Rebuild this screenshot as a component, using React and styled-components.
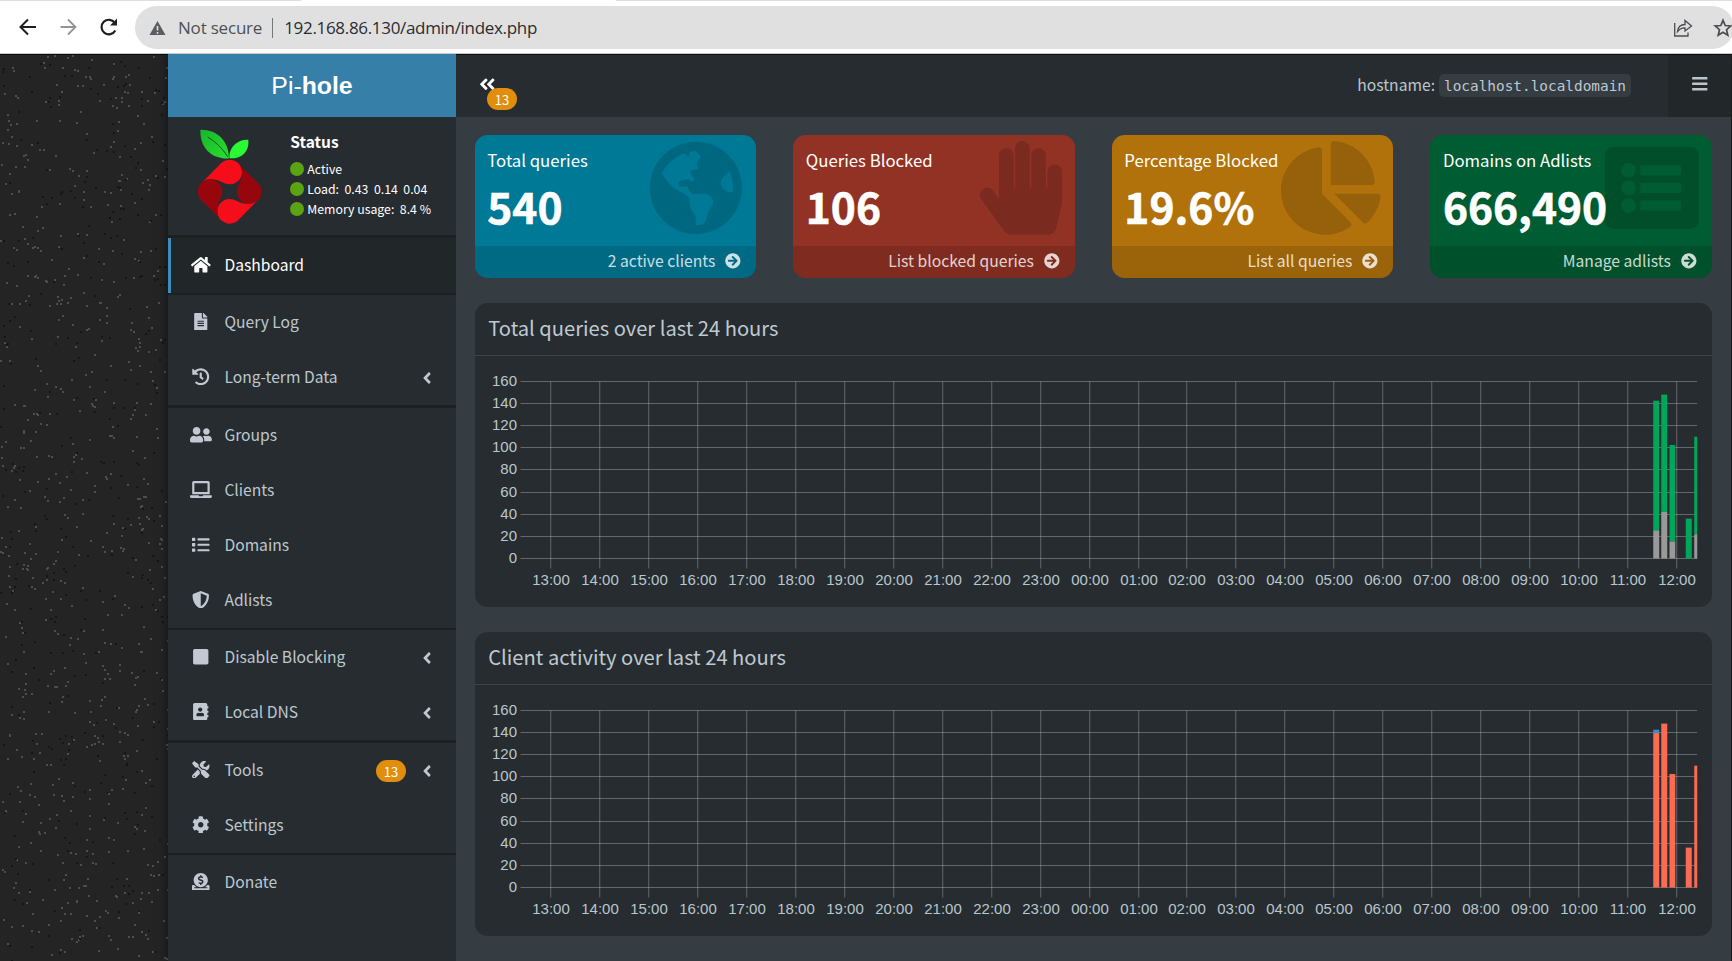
import React from "react";
import styled, { createGlobalStyle } from "styled-components";
import {
  FaHome, FaFileAlt, FaHistory, FaUserFriends, FaLaptop, FaList, FaShieldAlt,
  FaSquare, FaAddressBook, FaTools, FaCog, FaDonate, FaAngleLeft,
  FaAngleDoubleLeft, FaBars, FaArrowCircleRight, FaHandPaper, FaChartPie,
  FaListAlt,
} from "react-icons/fa";

const ui = `"Noto Sans CJK JP", "Noto Sans", sans-serif`;

const GlobalStyle = createGlobalStyle`
  * { box-sizing: border-box; }
  body {
    margin: 0;
    overflow: hidden;
    background: #242424;
    font-family: ${ui};
    color: #b8c7ce;
  }
  svg { display: block; flex: none; }
`;

const Page = styled.div`
  width: 1732px;
  height: 961px;
  display: flex;
  flex-direction: column;
`;

/* ---------- browser bar ---------- */

const BrowserBar = styled.div`
  height: 54px;
  background: #fff;
  border-bottom: 1px solid #c8c9cb;
  display: flex;
  flex-direction: column;
  overflow: hidden;
`;

const TabStrip = styled.div`
  height: 1px;
  margin-bottom: 5px;
  background: linear-gradient(to right, #e8dad8 301px, #fff 301px, #fff 616px, #e8dad8 616px);
`;

const BrowserTools = styled.div`
  display: flex;
  align-items: center;
  height: 43px;
  padding-left: 17px;
`;

const NavButton = styled.div`
  width: 40px;
  flex: none;
  display: flex;
  color: ${(p) => (p.$muted ? "#949494" : "#1f1f1f")};
`;

const AddressBar = styled.div`
  width: 1599px;
  height: 43px;
  margin-left: -2px;
  border-radius: 22px;
  background: #e0e0e0;
  display: flex;
  align-items: center;
  padding: 0 3px 0 14px;
  flex: none;
  font-family: "Open Sans", "Noto Sans", sans-serif;
  font-size: 17px;
  color: #2a2c30;
`;

const Security = styled.span`
  margin-left: 12px;
  color: #4d5156;
  letter-spacing: -0.2px;
`;

const Divider = styled.span`
  width: 1px;
  height: 20px;
  margin: 0 11.5px 0 9.5px;
  background: #777;
`;

const Url = styled.span`
  flex: 1;
  letter-spacing: -0.32px;
`;

const AddressActions = styled.div`
  display: flex;
  align-items: center;
  gap: 20px;
  margin-right: -2px;
`;

/* ---------- frame ---------- */

const Frame = styled.div`
  flex: 1;
  display: flex;
  min-height: 0;
  overflow: hidden;
`;

const Gutter = styled.div`
  width: 168px;
  flex: none;
  overflow: hidden;
  background: #242424;
  border-top: 1px solid #0c0d0e;
`;

const Wrapper = styled.div`
  width: 1563px;
  display: flex;
  background: #353c42;
  box-shadow: 0 0 10px rgba(0, 0, 0, 0.5);
`;

const Sidebar = styled.aside`
  width: 288px;
  flex: none;
  background: #272c30;
  display: flex;
  flex-direction: column;
`;

const Brand = styled.div`
  height: 63px;
  background: #367fa9;
  color: #fff;
  font: 24.8px/63px "Liberation Sans", Arial, sans-serif;
  text-align: center;
`;

const UserPanel = styled.div`
  height: 118px;
  display: flex;
  padding: 12px 0 0 29px;
  color: #fff;
`;

const StatusBlock = styled.div`
  margin-left: 28px;
  font-size: 12.3px;
  line-height: 20px;
`;

const StatusTitle = styled.div`
  font-size: 15.5px;
  font-weight: 700;
  line-height: 24px;
  margin-bottom: 6px;
`;

const StatusLine = styled.div`
  display: flex;
  align-items: center;
  gap: 3px;
  white-space: pre;
`;

const Dot = styled.i`
  width: 14px;
  height: 14px;
  border-radius: 50%;
  background: #5ba313;
`;

const Separator = styled.div`
  height: ${(p) => p.$size}px;
  background: #1c2023;
`;

const Item = styled.div`
  height: 55px;
  display: flex;
  align-items: center;
  padding: 0 24px 2px ${(p) => (p.$active ? 16 : 19)}px;
  border-left: ${(p) => (p.$active ? "3px solid #3c8dbc" : "0")};
  background: ${(p) => (p.$active ? "#212629" : "transparent")};
  color: ${(p) => (p.$active ? "#fff" : "#bcc8cf")};
  font-size: 15.65px;
  line-height: 24px;
`;

const ItemIcon = styled.span`
  width: 28px;
  margin-right: 9.4px;
  display: flex;
  justify-content: center;
  font-size: 17.5px;
  color: ${(p) => (p.$active ? "#fff" : "#c3c9d2")};

  svg {
    width: ${(p) => p.$ratio}em;
  }
`;

const ItemLabel = styled.span`
  flex: 1;
`;

const Badge = styled.span`
  width: 30px;
  height: 22px;
  border-radius: 11px;
  background: #e08e0b;
  color: #fff;
  font-size: 13px;
  line-height: 23px;
  text-align: center;
`;

const ItemBadge = styled(Badge)`
  margin-top: 2px;
`;

const Chevron = styled.span`
  display: flex;
  justify-content: center;
  width: 10px;
  margin: 2px 0.5px 0 15.5px;
  font-size: 18px;
`;

/* ---------- main column ---------- */

const Main = styled.main`
  flex: 1;
  display: flex;
  flex-direction: column;
`;

const TopBar = styled.header`
  height: 63px;
  background: #272c30;
  border-top: 1px solid #0c0d0e;
  display: flex;
  align-items: center;
`;

const Toggle = styled.div`
  position: relative;
  margin: 0 auto 4px 22px;
  font-size: 18.5px;
  color: #fff;
`;

const ToggleBadge = styled(Badge)`
  position: absolute;
  left: 9px;
  top: 13.5px;
`;

const Hostname = styled.div`
  display: flex;
  align-items: center;
  font-size: 15.7px;
  line-height: 24px;
  margin-right: 37px;
  padding-bottom: 2px;
`;

const Code = styled.code`
  height: 23px;
  margin-left: 4px;
  padding: 0 5px;
  border-radius: 5px;
  background: #353c42;
  color: #bec9d0;
  font: 14.4px/24px "DejaVu Sans Mono", monospace;
`;

const MenuButton = styled.div`
  width: 63px;
  height: 100%;
  background: #22272a;
  display: flex;
  align-items: center;
  justify-content: center;
  padding-bottom: 4px;
  font-size: 17.5px;
`;

const Content = styled.div`
  padding: 18px 18.75px 0;
`;

const StatRow = styled.div`
  display: grid;
  grid-template-columns: repeat(4, 281.25px);
  gap: 37.3px;
`;

const Stat = styled.section`
  position: relative;
  height: 143px;
  border-radius: 12.5px;
  overflow: hidden;
  background: ${(p) => p.$color};
  color: #fff;
  display: flex;
  flex-direction: column;
`;

const StatBody = styled.div`
  flex: 1;
  padding: 13px 12.5px 0;
`;

const StatLabel = styled.div`
  position: relative;
  z-index: 1;
  font-size: 16.75px;
  line-height: 24px;
`;

const StatValue = styled.div`
  position: relative;
  z-index: 1;
  font-size: 42.5px;
  font-weight: 700;
  line-height: 48px;
  margin-top: 10px;
  -webkit-text-stroke: 0.6px #fff;
`;

const StatIcon = styled.div`
  position: absolute;
  top: 6px;
  right: ${(p) => p.$right}px;
  font-size: 93.75px;
  color: rgba(0, 0, 0, 0.15);

  svg {
    width: ${(p) => p.$ratio}em;
  }
`;

const StatFooter = styled.div`
  height: 32px;
  display: flex;
  align-items: center;
  justify-content: flex-end;
  gap: 10px;
  padding: 0 15px 2px 0;
  background: rgba(0, 0, 0, 0.12);
  color: rgba(255, 255, 255, 0.8);
  font-size: 15.7px;
  line-height: 24px;
`;

const Card = styled.section`
  height: 304px;
  margin-top: 25px;
  border-radius: 12.5px;
  background: #272c30;
  overflow: hidden;
`;

const CardTitle = styled.h3`
  height: 53px;
  margin: 0;
  padding: 0 13.5px;
  border-bottom: 1px solid #3e4549;
  font-size: 20.15px;
  font-weight: 400;
  line-height: 49px;
  color: #bec9d0;
`;

/* ---------- drawings ---------- */

function Speckle() {
  let seed = 20231;
  const rand = () => {
    seed = (seed + 0x6d2b79f5) | 0;
    let t = Math.imul(seed ^ (seed >>> 15), 1 | seed);
    t = (t + Math.imul(t ^ (t >>> 7), 61 | t)) ^ t;
    return ((t ^ (t >>> 14)) >>> 0) / 4294967296;
  };
  const dots = [];
  for (let i = 0; i < 1030; i++) {
    dots.push([Math.floor(rand() * 168), Math.floor(rand() * 907), rand()]);
  }
  return (
    <svg width="168" height="907">
      {dots.map(([x, y, t], i) => (
        <rect key={i} x={x} y={y} width="2" height="2" fill={t < 0.64 ? "#4e4e4e" : "#151515"} />
      ))}
    </svg>
  );
}

function Globe() {
  return (
    <svg width="1em" height="1em" viewBox="522 245 280 280">
      <path
        fill="currentColor"
        fillRule="evenodd"
        d="M662 247.500A137.500 137.500 0 1 1 662 522.500A137.500 137.500 0 1 1 662 247.500Z
           M560 342C575 315 600 292 622 284L630 283 636 289Q644 291 643 283L644 277 660 274 675 290Q677 295 670 302L665 308 666 316 669 324Q668 330 658 330L648 332Q643 334 646 342L656 356Q658 366 650 367L643 361Q625 358 610 368Q607 376 617 381L632 380Q640 382 641 392L652 403 690 402Q705 406 714 422Q715 434 706 445L697 462 692 482 686 493 662 497 661 474Q660 465 648 450L644 436 643 420Q642 412 630 404L603 390Q588 382 574 362Z
           M762 335C772 355 776 380 771 399L757 397C744 392 734 378 736 366L745 351Z"
      />
    </svg>
  );
}

function Logo() {
  const petal = "M182 158A37 37 0 1 1 208 221C190 221 178 206 152 206A37 37 0 0 0 124 217Z";
  return (
    <svg width="65.3" height="95.3" viewBox="110 55 196 286">
      <defs>
        <linearGradient id="leaf" x1="0" y1="0" x2="1" y2="1">
          <stop offset="0" stopColor="#17b52c" />
          <stop offset="1" stopColor="#2ade30" />
        </linearGradient>
      </defs>
      <path d="M120 57C172 56 206 92 206 143C196 145 185 143 175 140C140 131 119 100 120 57Z" fill="url(#leaf)" />
      <path d="M142 79Q178 100 203 139" stroke="#14551f" strokeWidth="3" fill="none" />
      <path d="M264 87C268 124 243 145 207 143C205 110 230 85 264 87Z" fill="#29fa33" />
      {[0, 90, 180, 270].map((a) => (
        <path key={a} d={petal} transform={`rotate(${a} 208 243)`} fill={a % 180 ? "#96060c" : "#f60d1a"} />
      ))}
    </svg>
  );
}

const baseY = 202.5;
const stepY = 22.15;
const unit = stepY / 20;
const firstX = 75.75;
const stepX = 48.96;

function Chart({ bars }) {
  const hours = Array.from({ length: 24 }, (_, i) => `${String((13 + i) % 24).padStart(2, "0")}:00`);
  return (
    <svg width="1237" height="250" fontFamily='"Liberation Sans", Arial, sans-serif' fontSize="15" fill="#b8c7ce">
      {Array.from({ length: 9 }, (_, i) => {
        const y = Math.round(baseY - i * stepY - 0.5) + 0.5;
        return (
          <g key={i}>
            <path d={`M45.5 ${y}H1222.2`} stroke="#c8c8c8" strokeOpacity="0.38" />
            <text x="42" y={y + 4.5} textAnchor="end">{i * 20}</text>
          </g>
        );
      })}
      {hours.map((h, i) => {
        const x = Math.round(firstX + i * stepX - 0.75) + 0.75;
        return (
          <g key={h}>
            <path d={`M${x} 25.5V212.5`} stroke="#c8c8c8" strokeOpacity="0.38" />
            <text x={x + 0.25} y="229" textAnchor="middle">{h}</text>
          </g>
        );
      })}
      {bars.map(([x, w, from, to, fill], i) => (
        <rect key={i} x={x} y={baseY - to * unit} width={w} height={(to - from) * unit} fill={fill} />
      ))}
    </svg>
  );
}

const slots = [[1178.25, 6], [1186.25, 6], [1194.5, 5.75], [1210.75, 6], [1219.25, 3]];
const totals = [142.5, 148, 102.5, 36, 110];
const blocked = [25.5, 42, 15.5, 0, 22];

const queryBars = slots.flatMap(([x, w], i) => [
  [x, w, 0, blocked[i], "#999"],
  [x, w, blocked[i], totals[i], "#00a65a"],
]);

const clientBars = [
  ...slots.map(([x, w], i) => [x, w, 0, i ? totals[i] : 139.5, "#fb6a53"]),
  [slots[0][0], slots[0][1], 139.5, 142.5, "#3390c4"],
];

/* ---------- data ---------- */

const menu = [
  { sep: 3 },
  { icon: FaHome, label: "Dashboard", ratio: 1.125, active: true },
  { sep: 2 },
  { icon: FaFileAlt, label: "Query Log" },
  { icon: FaHistory, label: "Long-term Data", more: true },
  { sep: 3 },
  { icon: FaUserFriends, label: "Groups", ratio: 1.25 },
  { icon: FaLaptop, label: "Clients", ratio: 1.25 },
  { icon: FaList, label: "Domains" },
  { icon: FaShieldAlt, label: "Adlists" },
  { sep: 2 },
  { icon: FaSquare, label: "Disable Blocking", more: true },
  { icon: FaAddressBook, label: "Local DNS", more: true },
  { sep: 3 },
  { icon: FaTools, label: "Tools", more: true, badge: 13 },
  { icon: FaCog, label: "Settings" },
  { sep: 2 },
  { icon: FaDonate, label: "Donate" },
];

const stats = [
  { label: "Total queries", value: "540", link: "2 active clients", color: "#007997", icon: Globe, right: 13.5, ratio: 1 },
  { label: "Queries Blocked", value: "106", link: "List blocked queries", color: "#913225", icon: FaHandPaper, right: 12.5, ratio: 0.875 },
  { label: "Percentage Blocked", value: "19.6%", link: "List all queries", color: "#b1720c", icon: FaChartPie, right: 12.5, ratio: 1.0625 },
  { label: "Domains on Adlists", value: "666,490", link: "Manage adlists", color: "#005c32", icon: FaListAlt, right: 12.5, ratio: 1 },
];

export default function App() {
  return (
    <Page>
      <GlobalStyle />
      <BrowserBar>
        <TabStrip />
        <BrowserTools>
          <NavButton>
            <svg width="22" height="22" viewBox="0 0 22 22" fill="none" stroke="currentColor" strokeWidth="2">
              <path d="M19 10H3.500M11 2.500L3.500 10l7.500 7.500" />
            </svg>
          </NavButton>
          <NavButton $muted>
            <svg width="22" height="22" viewBox="0 0 22 22" fill="none" stroke="currentColor" strokeWidth="1.800">
              <path d="M3.500 10H18M11 2.500L18.500 10 11 17.500" />
            </svg>
          </NavButton>
          <NavButton>
            <svg width="24" height="22" viewBox="0 0 24 22" fill="none" stroke="currentColor" strokeWidth="2.200">
              <path d="M18.300 13.500A7.300 7.300 0 1 1 17.800 5.800" />
              <path d="M20 1.500V8.500H13Z" fill="currentColor" stroke="none" />
            </svg>
          </NavButton>
          <AddressBar>
            <svg width="17" height="16" viewBox="0 0 17 16">
              <path d="M8.500 1L16.500 15H.5Z" fill="#5a5d61" />
              <path d="M8.500 6V10.500M8.500 12V13.700" stroke="#e0e0e0" strokeWidth="1.600" />
            </svg>
            <Security>Not secure</Security>
            <Divider />
            <Url>192.168.86.130/admin/index.php</Url>
            <AddressActions>
              <svg width="20" height="20" viewBox="0 0 20 20" fill="none" stroke="#4a4c50" strokeWidth="1.300">
                <path d="M1.700 5V18H15V14.500" />
                <path d="M4.500 13.500C5 9 8 6.500 12 6.500V2.500L18.500 8 12 13V9.800C9 9.800 6.500 10.800 4.500 13.500Z" />
              </svg>
              <svg width="20" height="20" viewBox="0 0 20 20" fill="none" stroke="#4a4c50" strokeWidth="1.700">
                <path d="M10 2.300L12.200 7.500 17.800 8 13.500 11.700 14.800 17.200 10 14.300 5.200 17.200 6.500 11.700 2.200 8 7.800 7.500Z" />
              </svg>
            </AddressActions>
          </AddressBar>
        </BrowserTools>
      </BrowserBar>

      <Frame>
        <Gutter><Speckle /></Gutter>
        <Wrapper>
          <Sidebar>
            <Brand>Pi-<b>hole</b></Brand>
            <UserPanel>
              <Logo />
              <StatusBlock>
                <StatusTitle>Status</StatusTitle>
                <StatusLine><Dot />Active</StatusLine>
                <StatusLine><Dot />{"Load:  0.43  0.14  0.04"}</StatusLine>
                <StatusLine><Dot />{"Memory usage:  8.4 %"}</StatusLine>
              </StatusBlock>
            </UserPanel>
            {menu.map((m, i) =>
              m.sep ? (
                <Separator key={i} $size={m.sep} />
              ) : (
                <Item key={i} $active={m.active}>
                  <ItemIcon $active={m.active} $ratio={m.ratio || 1}><m.icon /></ItemIcon>
                  <ItemLabel>{m.label}</ItemLabel>
                  {m.badge && <ItemBadge>{m.badge}</ItemBadge>}
                  {m.more && <Chevron><FaAngleLeft /></Chevron>}
                </Item>
              )
            )}
          </Sidebar>
          <Main>
            <TopBar>
              <Toggle>
                <FaAngleDoubleLeft />
                <ToggleBadge>13</ToggleBadge>
              </Toggle>
              <Hostname>hostname:<Code>localhost.localdomain</Code></Hostname>
              <MenuButton><FaBars /></MenuButton>
            </TopBar>
            <Content>
              <StatRow>
                {stats.map((s) => (
                  <Stat key={s.label} $color={s.color}>
                    <StatBody>
                      <StatLabel>{s.label}</StatLabel>
                      <StatValue>{s.value}</StatValue>
                    </StatBody>
                    <StatIcon $right={s.right} $ratio={s.ratio}><s.icon /></StatIcon>
                    <StatFooter>{s.link}<FaArrowCircleRight /></StatFooter>
                  </Stat>
                ))}
              </StatRow>
              <Card>
                <CardTitle>Total queries over last 24 hours</CardTitle>
                <Chart bars={queryBars} />
              </Card>
              <Card>
                <CardTitle>Client activity over last 24 hours</CardTitle>
                <Chart bars={clientBars} />
              </Card>
            </Content>
          </Main>
        </Wrapper>
      </Frame>
    </Page>
  );
}
